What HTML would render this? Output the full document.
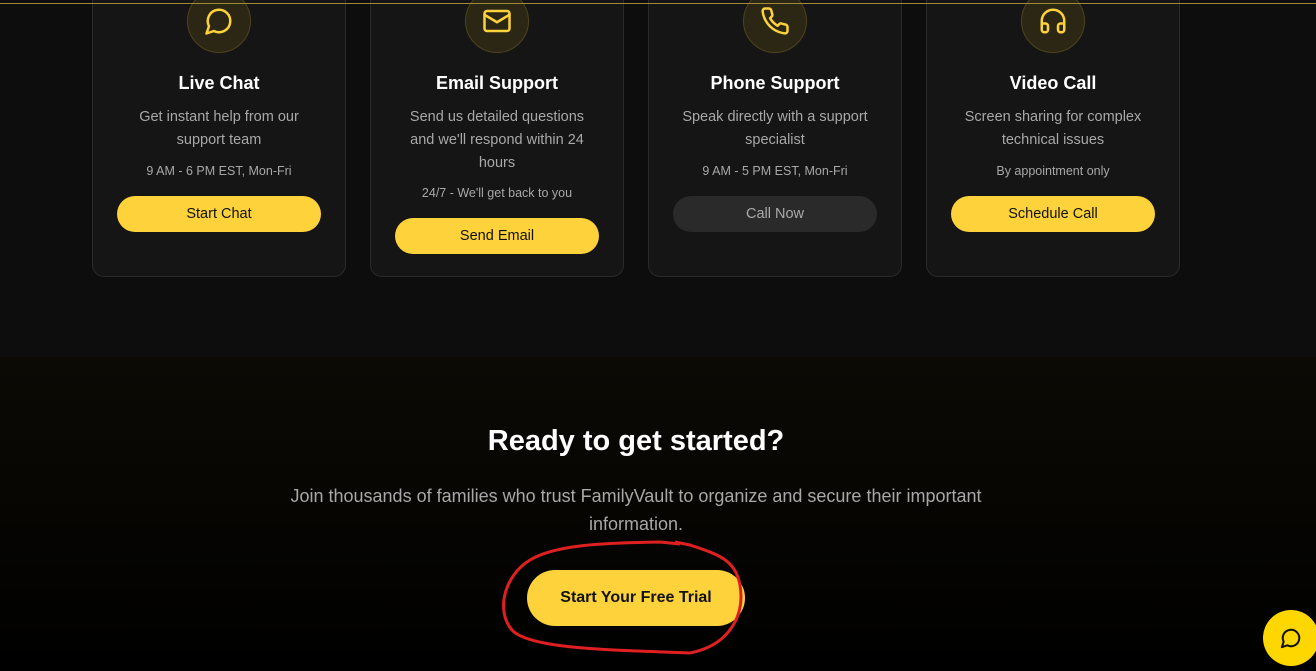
<!DOCTYPE html>
<html><head><meta charset="utf-8"><style>
*{margin:0;padding:0;box-sizing:border-box}
body{width:1316px;height:671px;overflow:hidden;background:#000;font-family:"Liberation Sans",sans-serif;position:relative}
.top{position:absolute;left:0;top:0;width:1316px;height:357px;background:#0d0d0d}
.line{position:absolute;left:0;top:3px;width:1316px;height:1px;background:#a08a3a;z-index:5}
.bot{position:absolute;left:0;top:357px;width:1316px;height:314px;background:linear-gradient(#0c0a05,#000)}
.card{position:absolute;top:-20px;width:254px;height:297px;background:#151515;border:1px solid #2a2a2a;border-radius:12px;text-align:center;color:#fff}
.ic{position:absolute;left:94px;top:8px;width:64px;height:64px;border-radius:50%;background:#2c2715;border:1px solid #4d431c;display:flex;align-items:center;justify-content:center}
.t{position:absolute;left:0;right:0;top:92px;font-size:18px;font-weight:bold}
.d{position:absolute;left:32px;right:32px;top:125px;font-size:14.5px;line-height:23px;color:#a8a8a8}
.m{position:absolute;left:0;right:0;font-size:12.5px;color:#a8a8a8}
.b{position:absolute;left:24px;width:204px;height:36px;border-radius:18px;background:#fdd23a;color:#111;font-size:14.5px;line-height:36px}
</style></head><body>
<div class="top"></div><div class="line"></div><div class="bot"></div>

<div class="card" style="left:92px">
<div class="ic"><svg width="30" height="30" viewBox="0 0 24 24" fill="none" stroke="#fdd23a" stroke-width="2" stroke-linecap="round" stroke-linejoin="round"><path d="M7.9 20A9 9 0 1 0 4 16.1L2 22Z"/></svg></div>
<div class="t">Live Chat</div>
<div class="d">Get instant help from our support team</div>
<div class="m" style="top:183px">9 AM - 6 PM EST, Mon-Fri</div>
<div class="b" style="top:215px">Start Chat</div>
</div>

<div class="card" style="left:370px">
<div class="ic"><svg width="30" height="30" viewBox="0 0 24 24" fill="none" stroke="#fdd23a" stroke-width="2" stroke-linecap="round" stroke-linejoin="round"><rect x="2" y="4" width="20" height="16" rx="2"/><path d="m22 7-10 6L2 7"/></svg></div>
<div class="t">Email Support</div>
<div class="d">Send us detailed questions and we'll respond within 24 hours</div>
<div class="m" style="top:205px">24/7 - We'll get back to you</div>
<div class="b" style="top:237px">Send Email</div>
</div>

<div class="card" style="left:648px">
<div class="ic"><svg width="30" height="30" viewBox="0 0 24 24" fill="none" stroke="#fdd23a" stroke-width="2" stroke-linecap="round" stroke-linejoin="round"><path d="M22 16.9v3a2 2 0 0 1-2.2 2 19.8 19.8 0 0 1-8.6-3.1 19.5 19.5 0 0 1-6-6A19.8 19.8 0 0 1 2.1 4.2 2 2 0 0 1 4.1 2h3a2 2 0 0 1 2 1.7c.1.9.4 1.8.7 2.7a2 2 0 0 1-.5 2.1L8.1 9.8a16 16 0 0 0 6 6l1.3-1.3a2 2 0 0 1 2.1-.4c.9.3 1.8.6 2.7.7a2 2 0 0 1 1.8 2z"/></svg></div>
<div class="t">Phone Support</div>
<div class="d">Speak directly with a support specialist</div>
<div class="m" style="top:183px">9 AM - 5 PM EST, Mon-Fri</div>
<div class="b" style="top:215px;background:#2a2a2a;color:#aaa">Call Now</div>
</div>

<div class="card" style="left:926px">
<div class="ic"><svg width="30" height="30" viewBox="0 0 24 24" fill="none" stroke="#fdd23a" stroke-width="2" stroke-linecap="round" stroke-linejoin="round"><path d="M3 14h3a2 2 0 0 1 2 2v3a2 2 0 0 1-2 2H5a2 2 0 0 1-2-2v-7a9 9 0 0 1 18 0v7a2 2 0 0 1-2 2h-1a2 2 0 0 1-2-2v-3a2 2 0 0 1 2-2h3"/></svg></div>
<div class="t">Video Call</div>
<div class="d">Screen sharing for complex technical issues</div>
<div class="m" style="top:183px">By appointment only</div>
<div class="b" style="top:215px">Schedule Call</div>
</div>

<div style="position:absolute;left:236px;width:800px;top:425px;text-align:center;color:#fff;font-size:29px;font-weight:bold">Ready to get started?</div>
<div style="position:absolute;left:241px;width:790px;top:482px;text-align:center;color:#a8a8a8;font-size:18px;line-height:28px">Join thousands of families who trust FamilyVault to organize and secure their important information.</div>
<div style="position:absolute;left:527px;top:570px;width:218px;height:56px;border-radius:28px;background:#fdd23a;color:#111;font-size:16px;line-height:56px;text-align:center;font-weight:bold">Start Your Free Trial</div>

<svg style="position:absolute;left:0;top:0" width="1316" height="671"><path d="M660 542 C600 543 555 545 530 560 C505 575 495 610 512 630 C530 650 620 650 690 653 C730 645 745 615 740 585 C735 560 720 555 690 545 L675 542 M660 542 L680 544" fill="none" stroke="#e02020" stroke-width="3"/></svg>

<div style="position:absolute;left:1263px;top:610px;width:56px;height:56px;border-radius:50%;background:#ffd700;display:flex;align-items:center;justify-content:center"><svg width="22" height="22" viewBox="0 0 24 24" fill="none" stroke="#111" stroke-width="2.2" stroke-linejoin="round"><path d="M7.9 20A9 9 0 1 0 4 16.1L2 22Z"/></svg></div>
</body></html>
